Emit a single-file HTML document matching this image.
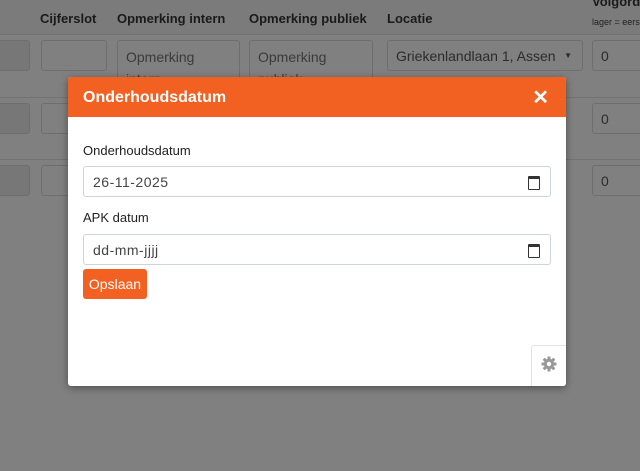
<!DOCTYPE html>
<html><head><style>
body{margin:0;width:640px;height:471px;background:#808080;font-family:"Liberation Sans",sans-serif;position:relative;overflow:hidden}
.a{position:absolute;white-space:nowrap}
.hdr{left:0;top:0;width:640px;height:34px;background:#7b7b7b}
.th{top:11px;font-weight:bold;font-size:13px;color:#1a1a1a}
.inp{position:absolute;border:1px solid #6e6e6e;border-radius:3px;background:#808080;box-sizing:border-box;color:#2b2b2b;font-size:14px;padding:7px 8px;white-space:nowrap;overflow:hidden}
.line{position:absolute;left:0;width:640px;height:1px;background:#727272}
.modal{left:68px;top:77px;width:498px;height:309px;background:#fff;border-radius:3px;box-shadow:0 2px 8px rgba(0,0,0,.4);overflow:hidden}
.mh{height:40px;background:#f26122;color:#fff;font-weight:bold;font-size:16px;line-height:42px;padding-left:15px;position:relative}
.lbl{position:absolute;left:15px;font-size:13px;color:#222}
.fi{position:absolute;left:15px;width:468px;height:31px;border:1px solid #ced4da;border-radius:3px;box-sizing:border-box;font-size:14px;color:#444;padding:7px 9px;letter-spacing:.5px}
.cal{position:absolute;right:10px;top:9px;width:10px;height:10px;border:1.5px solid #333;border-top-width:3px;border-radius:1px}
</style></head><body>
<div class="a hdr"></div>
<div class="a th" style="left:40px">Cijferslot</div>
<div class="a th" style="left:117px">Opmerking intern</div>
<div class="a th" style="left:249px">Opmerking publiek</div>
<div class="a th" style="left:387px">Locatie</div>
<div class="a th" style="left:592px;top:-6px">Volgorde</div>
<div class="a" style="left:592px;top:17px;font-size:9px;color:#222">lager = eerst</div>
<div class="line" style="top:34px"></div>
<div class="inp" style="left:-5px;top:40px;width:35px;height:31px;background:#777"></div>
<div class="inp" style="left:41px;top:40px;width:66px;height:31px"></div>
<div class="inp" style="left:117px;top:40px;width:123px;height:50px;color:#3a3a3a;line-height:22px;padding-top:5px">Opmerking<br>intern</div>
<div class="inp" style="left:249px;top:40px;width:124px;height:50px;color:#3a3a3a;line-height:22px;padding-top:5px">Opmerking<br>publiek</div>
<div class="inp" style="left:387px;top:40px;width:196px;height:31px">Griekenlandlaan 1, Assen<span style="position:absolute;right:10px;top:10px;font-size:8px">▼</span></div>
<div class="inp" style="left:592px;top:40px;width:60px;height:31px">0</div>
<div class="line" style="top:97px"></div>
<div class="inp" style="left:-5px;top:103px;width:35px;height:31px;background:#777"></div>
<div class="inp" style="left:41px;top:103px;width:66px;height:31px"></div>
<div class="inp" style="left:592px;top:103px;width:60px;height:31px">0</div>
<div class="line" style="top:159px"></div>
<div class="inp" style="left:-5px;top:165px;width:35px;height:31px;background:#777"></div>
<div class="inp" style="left:41px;top:165px;width:66px;height:31px"></div>
<div class="inp" style="left:592px;top:165px;width:60px;height:31px">0</div>
<div class="a modal">
<div class="mh">Onderhoudsdatum<span style="position:absolute;right:17px;top:0;font-size:20px">✕</span></div>
<div class="lbl" style="top:66px">Onderhoudsdatum</div>
<div class="fi" style="top:89px">26-11-2025<div class="cal"></div></div>
<div class="lbl" style="top:133px">APK datum</div>
<div class="fi" style="top:157px">dd-mm-jjjj<div class="cal"></div></div>
<div style="position:absolute;left:15px;top:192px;width:64px;height:30px;background:#f26122;border-radius:3px;color:#fff;font-size:14px;line-height:30px;text-align:center">Opslaan</div>
<div style="position:absolute;left:463px;top:268px;width:40px;height:45px;border:1px solid #e3e3e3;border-radius:3px;background:#fff;box-sizing:border-box"></div>
<svg style="position:absolute;left:473px;top:279px" width="16" height="16" viewBox="0 0 16 16"><g fill="#999"><circle cx="8" cy="8" r="5.2"/><rect x="6.5" y="0.5" width="3" height="15" rx=".5"/><rect x="6.5" y="0.5" width="3" height="15" rx=".5" transform="rotate(45 8 8)"/><rect x="6.5" y="0.5" width="3" height="15" rx=".5" transform="rotate(90 8 8)"/><rect x="6.5" y="0.5" width="3" height="15" rx=".5" transform="rotate(135 8 8)"/></g><circle cx="8" cy="8" r="2.2" fill="#fff"/></svg>
</div>
</body></html>
